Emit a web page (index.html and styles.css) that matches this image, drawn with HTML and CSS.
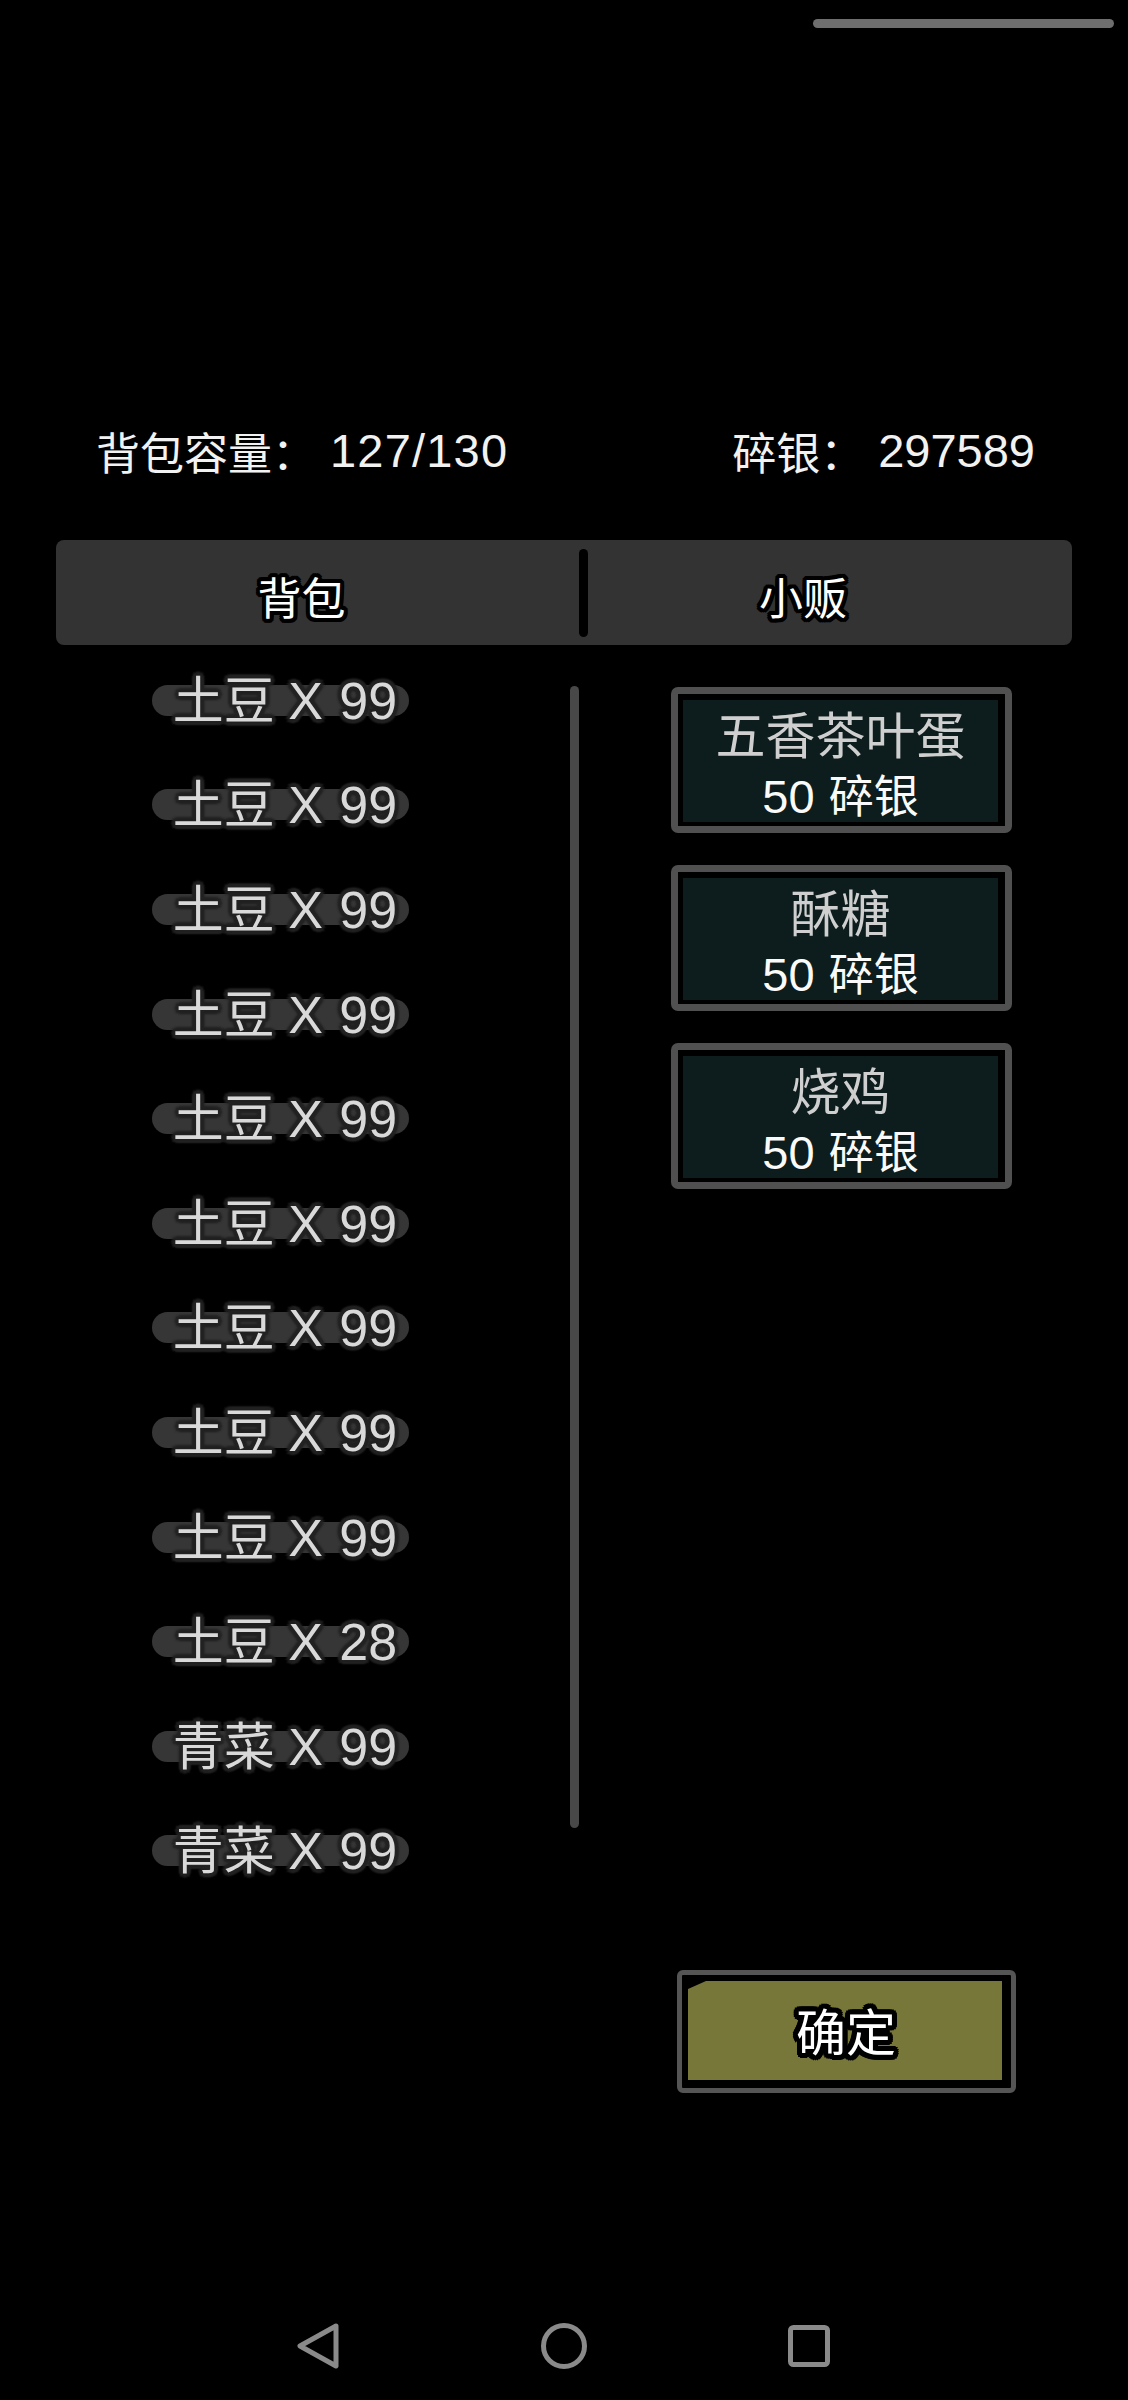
FILE: index.html
```html
<!DOCTYPE html>
<html lang="zh-CN">
<head>
<meta charset="utf-8">
<title>背包</title>
<link rel="stylesheet" href="styles.css">
</head>
<body>
<div class="screen">
  <div class="status"><div class="status-pill"></div></div>
  <div class="stats">
    <div class="stat"><span class="stat-label">背包容量：</span><span class="num num-fraction">127/130</span></div>
    <div class="stat"><span class="stat-label">碎银：</span><span class="num">297589</span></div>
  </div>
  <div class="tabs">
    <div class="tab tab-left">背包</div>
    <div class="tab-divider"></div>
    <div class="tab tab-right">小贩</div>
  </div>
  <div class="content">
    <ul class="items">
      <li class="item"><span class="item-text"><span class="item-label">土豆 <span class="num">X 99</span></span></span></li>
      <li class="item"><span class="item-text"><span class="item-label">土豆 <span class="num">X 99</span></span></span></li>
      <li class="item"><span class="item-text"><span class="item-label">土豆 <span class="num">X 99</span></span></span></li>
      <li class="item"><span class="item-text"><span class="item-label">土豆 <span class="num">X 99</span></span></span></li>
      <li class="item"><span class="item-text"><span class="item-label">土豆 <span class="num">X 99</span></span></span></li>
      <li class="item"><span class="item-text"><span class="item-label">土豆 <span class="num">X 99</span></span></span></li>
      <li class="item"><span class="item-text"><span class="item-label">土豆 <span class="num">X 99</span></span></span></li>
      <li class="item"><span class="item-text"><span class="item-label">土豆 <span class="num">X 99</span></span></span></li>
      <li class="item"><span class="item-text"><span class="item-label">土豆 <span class="num">X 99</span></span></span></li>
      <li class="item"><span class="item-text"><span class="item-label">土豆 <span class="num">X 28</span></span></span></li>
      <li class="item"><span class="item-text"><span class="item-label">青菜 <span class="num">X 99</span></span></span></li>
      <li class="item"><span class="item-text"><span class="item-label">青菜 <span class="num">X 99</span></span></span></li>
    </ul>
    <div class="scrollbar"></div>
    <div class="goods">
      <div class="card"><div class="card-fill"><div class="card-name">五香茶叶蛋</div><div class="card-price"><span class="num">50</span> 碎银</div></div></div>
      <div class="card"><div class="card-fill"><div class="card-name">酥糖</div><div class="card-price"><span class="num">50</span> 碎银</div></div></div>
      <div class="card"><div class="card-fill"><div class="card-name">烧鸡</div><div class="card-price"><span class="num">50</span> 碎银</div></div></div>
    </div>
  </div>
  <div class="actions">
    <div class="confirm"><div class="confirm-fill">确定</div></div>
  </div>
  <div class="nav">
    <svg class="nav-icon" viewBox="0 0 60 60"><path d="M47 10 L11 30 L47 50 Z"/></svg>
    <svg class="nav-icon" viewBox="0 0 60 60"><circle cx="30" cy="30" r="20.5"/></svg>
    <svg class="nav-icon" viewBox="0 0 60 60"><rect x="11.5" y="11.5" width="37" height="37" rx="3"/></svg>
  </div>
</div>
</body>
</html>
```

FILE: styles.css
```css
* { box-sizing: border-box; }
html, body { margin: 0; padding: 0; background: #000; }
.screen {
  width: 1128px;
  height: 2400px;
  background: #000;
  display: flex;
  flex-direction: column;
  font-family: "Noto Sans CJK SC", sans-serif;
  overflow: hidden;
}
.num { font-family: "Liberation Sans", Roboto, sans-serif; }
.status { display: flex; justify-content: flex-end; padding: 19px 14px 0 0; height: 28px; }
.status-pill { width: 301px; height: 9px; border-radius: 5px; background: #6e6e6e; }
.stats {
  display: flex;
  justify-content: space-between;
  margin-top: 392px;
  height: 63px;
  padding: 0 93px 0 96px;
  color: #f2f2f2;
  line-height: 62px;
}
.stat { display: flex; font-size: 44px; }
.stat .num { font-size: 47px; }
.stat .num-fraction { letter-spacing: 1.2px; }
.stat-label { margin-right: 14px; }
.tabs {
  display: flex;
  align-items: center;
  margin: 57px 56px 0;
  height: 105px;
  background: #333;
  border-radius: 8px;
}
.tab {
  text-align: center;
  color: #fff;
  font-size: 44px;
  line-height: 105px;
  padding-top: 4px;
  height: 105px;
  text-shadow:
    4px 0 0 #000, -4px 0 0 #000, 0 4px 0 #000, 0 -4px 0 #000,
    3px 3px 0 #000, -3px 3px 0 #000, 3px -3px 0 #000, -3px -3px 0 #000,
    4px 2px 0 #000, -4px 2px 0 #000, 4px -2px 0 #000, -4px -2px 0 #000,
    2px 4px 0 #000, -2px 4px 0 #000, 2px -4px 0 #000, -2px -4px 0 #000;
}
.tab-left { width: 523px; padding-right: 32px; }
.tab-right { width: 484px; padding-right: 54px; }
.tab-divider { width: 9px; height: 88px; background: #000; border-radius: 5px; }
.content { display: flex; margin-top: 3px; height: 1322px; }
.items { list-style: none; margin: 0; padding: 0; width: 570px; flex: none; }
.item { height: 104.6px; display: flex; justify-content: center; align-items: center; }
.item-text { display: grid; align-items: center; }
.item-text::before {
  content: "";
  grid-area: 1 / 1;
  height: 31px;
  margin: 0 -12px 0 -21px;
  background: #363636;
  border-radius: 16px;
}
.item-label {
  grid-area: 1 / 1;
  margin-top: -3px;
  color: #d9d9d9;
  font-size: 51px;
  line-height: 60px;
  word-spacing: 2px;
  white-space: nowrap;
  text-shadow:
    4px 0 2px #222, -4px 0 2px #222, 0 4px 2px #222, 0 -4px 2px #222,
    3px 3px 2px #222, -3px 3px 2px #222, 3px -3px 2px #222, -3px -3px 2px #222;
}
.item-label .num { font-size: 52px; }
.scrollbar {
  flex: none;
  width: 9px;
  height: 1142px;
  margin-top: 38px;
  background: #484848;
  border-radius: 5px;
}
.goods { margin: 39px 0 0 92px; width: 341px; display: flex; flex-direction: column; gap: 32px; }
.card {
  height: 146px;
  border: 7px solid #505050;
  border-radius: 7px;
  padding: 6px 7px 4px 5px;
}
.card-fill { height: 100%; background: #0d1c1c; text-align: center; padding-top: 1px; }
.card-name { color: #cfcfcf; font-size: 50px; line-height: 62px; }
.card-price { color: #fafafa; font-size: 45px; line-height: 62px; word-spacing: 4px; }
.card-price .num { font-size: 47px; }
.actions { display: flex; justify-content: flex-end; padding-right: 112px; }
.confirm {
  width: 339px;
  height: 123px;
  border: 5px solid #555;
  border-radius: 6px;
  padding: 6px 9px 8px 6px;
}
.confirm-fill {
  height: 100%;
  background: #77773a;
  clip-path: polygon(18px 0, 100% 0, 100% 100%, 0 100%, 0 8px);
  text-align: center;
  color: #fff;
  font-size: 50px;
  line-height: 96px;
  padding-left: 2px;
  text-shadow:
    5px 0 0 #000, -5px 0 0 #000, 0 5px 0 #000, 0 -5px 0 #000,
    4px 4px 0 #000, -4px 4px 0 #000, 4px -4px 0 #000, -4px -4px 0 #000,
    5px 2px 0 #000, -5px 2px 0 #000, 5px -2px 0 #000, -5px -2px 0 #000,
    2px 5px 0 #000, -2px 5px 0 #000, 2px -5px 0 #000, -2px -5px 0 #000;
}
.nav { margin-top: auto; padding-bottom: 24px; display: flex; justify-content: center; gap: 185px; }
.nav-icon { width: 60px; height: 60px; display: block; fill: none; stroke: #8a8a8a; stroke-width: 5; stroke-linejoin: round; }
```
